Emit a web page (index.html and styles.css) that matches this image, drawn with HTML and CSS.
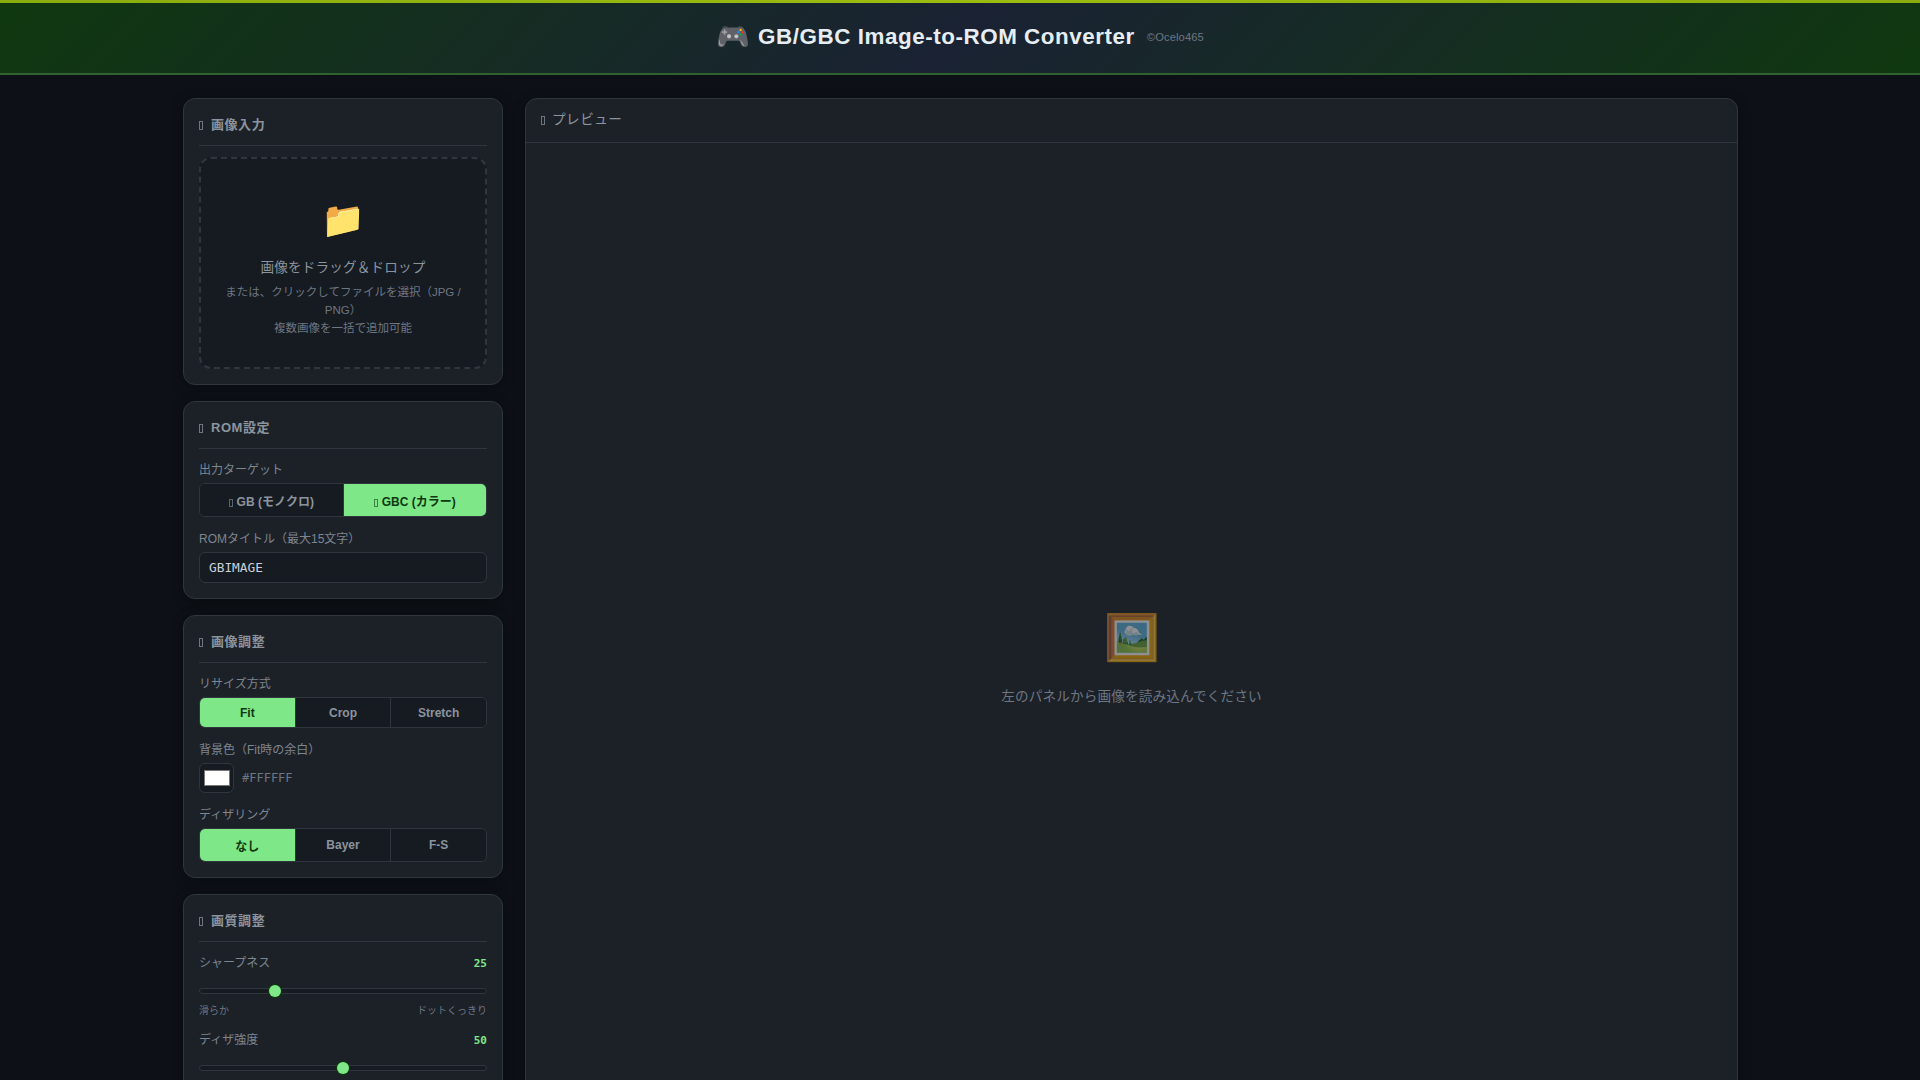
FILE: index.html
```html
<!DOCTYPE html>
<html lang="ja">
<head>
<meta charset="utf-8">
<title>GB/GBC Image-to-ROM Converter</title>
<link rel="stylesheet" href="styles.css">
</head>
<body>
<header class="app-header">
  <h1 class="app-title"><span class="app-emoji">🎮</span>GB/GBC Image-to-ROM Converter</h1>
  <span class="app-credit">©Ocelo465</span>
</header>
<main class="layout">
  <aside class="sidebar">
    <section class="panel">
      <h2 class="panel-title"><span class="tofu"></span>画像入力</h2>
      <div class="dropzone">
        <div class="drop-icon">📁</div>
        <p class="drop-main">画像をドラッグ＆ドロップ</p>
        <p class="drop-sub">または、クリックしてファイルを選択（JPG / PNG）<br>複数画像を一括で追加可能</p>
      </div>
    </section>
    <section class="panel">
      <h2 class="panel-title"><span class="tofu"></span>ROM設定</h2>
      <div class="field">
        <label class="field-label">出力ターゲット</label>
        <div class="toggle">
          <button class="toggle-btn"><span class="tofu tofu-sm"></span>GB (モノクロ)</button>
          <button class="toggle-btn is-active"><span class="tofu tofu-sm"></span>GBC (カラー)</button>
        </div>
      </div>
      <div class="field">
        <label class="field-label">ROMタイトル（最大15文字）</label>
        <input class="text-input" type="text" value="GBIMAGE">
      </div>
    </section>
    <section class="panel">
      <h2 class="panel-title"><span class="tofu"></span>画像調整</h2>
      <div class="field">
        <label class="field-label">リサイズ方式</label>
        <div class="toggle">
          <button class="toggle-btn is-active">Fit</button>
          <button class="toggle-btn">Crop</button>
          <button class="toggle-btn">Stretch</button>
        </div>
      </div>
      <div class="field">
        <label class="field-label">背景色（Fit時の余白）</label>
        <div class="color-row">
          <input class="color-input" type="color" value="#ffffff">
          <span class="color-value">#FFFFFF</span>
        </div>
      </div>
      <div class="field">
        <label class="field-label">ディザリング</label>
        <div class="toggle">
          <button class="toggle-btn is-active">なし</button>
          <button class="toggle-btn">Bayer</button>
          <button class="toggle-btn">F-S</button>
        </div>
      </div>
    </section>
    <section class="panel">
      <h2 class="panel-title"><span class="tofu"></span>画質調整</h2>
      <div class="field field-slider">
        <div class="slider-head"><label class="field-label">シャープネス</label><span class="slider-value">25</span></div>
        <input class="slider" type="range" min="0" max="100" value="25">
        <div class="slider-ends"><span>滑らか</span><span>ドットくっきり</span></div>
      </div>
      <div class="field field-slider">
        <div class="slider-head"><label class="field-label">ディザ強度</label><span class="slider-value">50</span></div>
        <input class="slider" type="range" min="0" max="100" value="50">
      </div>
    </section>
  </aside>
  <section class="preview">
    <h2 class="preview-title"><span class="tofu tofu-preview"></span>プレビュー</h2>
    <div class="preview-body">
      <div class="preview-icon">🖼️</div>
      <p class="preview-text">左のパネルから画像を読み込んでください</p>
    </div>
  </section>
</main>
</body>
</html>
```
FILE: styles.css
```css
* { box-sizing: border-box; }
html, body { margin: 0; height: 100%; overflow: hidden; }
body {
  background: #0d1117;
  color: #8b949e;
  font-family: "Liberation Sans", "Noto Sans CJK JP", sans-serif;
  font-size: 13px;
}
.app-header {
  height: 75px;
  padding: 3px 0 3px;
  display: flex;
  align-items: center;
  justify-content: center;
  gap: 12px;
  border-bottom: 2px solid #306230;
  background:
    linear-gradient(90deg, #8bac0f, #9bbc0f 50%, #8bac0f) 0 0 / 100% 3px no-repeat,
    linear-gradient(135deg, #0f380f 0%, #1a2233 50%, #0f380f 100%);
}
.app-title {
  margin: 0;
  display: flex;
  align-items: center;
  gap: 8px;
  font-size: 22.4px;
  font-weight: 700;
  letter-spacing: 0.55px;
  color: #e6edf3;
}
.app-emoji { font-size: 27.2px; letter-spacing: 0; }
.app-credit { font-size: 11.2px; letter-spacing: 0.1px; color: #6e7681; }
.layout {
  display: grid;
  grid-template-columns: 320px 1fr;
  gap: 22px;
  padding: 23px 182px 0 183px;
  height: 1005px;
  overflow: hidden;
  align-items: start;
}
.sidebar { display: flex; flex-direction: column; gap: 16px; }
.panel {
  background: #1c2128;
  border: 1px solid #30363d;
  border-radius: 12px;
  padding: 15px;
  box-shadow: 0 2px 12px rgba(0, 0, 0, 0.4);
}
.panel-title {
  margin: 0 0 11.5px;
  padding-bottom: 11.5px;
  border-bottom: 1px solid #30363d;
  font-size: 13px;
  font-weight: 700;
  letter-spacing: 0.55px;
  color: #8b949e;
}
.tofu {
  display: inline-block;
  width: 4px;
  height: 9px;
  margin-right: 8px;
  border: 1px solid #6e7681;
  vertical-align: -1px;
}
.tofu-sm { height: 8px; margin-right: 4px; opacity: 0.8; }
.tofu-preview { margin-right: 7px; }
.is-active .tofu-sm { border-color: #2f6a33; }
.dropzone {
  border: 2px dashed #30363d;
  border-radius: 12px;
  background: #161b22;
  padding: 30px 16px;
  text-align: center;
}
.drop-icon { font-size: 35.2px; margin-bottom: 5px; line-height: 62px; }
.drop-main { margin: 0 0 7px; font-size: 13.6px; letter-spacing: 0.15px; }
.drop-sub { margin: 0; font-size: 11.5px; line-height: 18px; color: #6e7681; }
.field { margin-bottom: 12px; }
.field:last-child { margin-bottom: 0; }
.field-slider { margin-bottom: 13px; }
.field-label { display: block; margin-bottom: 6px; font-size: 12px; color: #7d8590; }
.toggle {
  display: flex;
  border: 1px solid #30363d;
  border-radius: 6px;
  overflow: hidden;
  background: #161b22;
}
.toggle-btn {
  flex: 1 1 0;
  padding: 7.5px 4px;
  border: 0;
  border-right: 1px solid #30363d;
  background: #161b22;
  color: #8b949e;
  font: 700 12px "Liberation Sans", "Noto Sans CJK JP", sans-serif;
}
.toggle-btn:last-child { border-right: 0; }
.toggle-btn.is-active { background: #7ee787; color: #0f380f; }
.text-input {
  display: block;
  width: 100%;
  height: 31px;
  padding: 0 9px;
  border: 1px solid #30363d;
  border-radius: 6px;
  background: #161b22;
  color: #c9d1d9;
  font: 12.8px "DejaVu Sans Mono", monospace;
}
.color-row { display: flex; align-items: center; gap: 8px; }
.color-input {
  width: 35px;
  height: 30px;
  padding: 0;
  border: 1px solid #30363d;
  border-radius: 6px;
  background: #161b22;
}
.color-input::-webkit-color-swatch-wrapper { padding: 6px 3.5px; }
.color-value { font: 12px "DejaVu Sans Mono", monospace; color: #6e7681; }
.slider-head { display: flex; justify-content: space-between; align-items: baseline; }
.slider-value { font: 700 11px "DejaVu Sans Mono", monospace; color: #7ee787; }
.slider {
  display: block;
  width: 100%;
  height: 14px;
  margin: 8px 0 3.5px;
  appearance: none;
  -webkit-appearance: none;
  background: transparent;
}
.slider::-webkit-slider-runnable-track {
  height: 6px;
  border: 1px solid #30363d;
  border-radius: 3px;
  background: #161b22;
}
.slider::-webkit-slider-thumb {
  -webkit-appearance: none;
  width: 12px;
  height: 12px;
  margin-top: -4px;
  border-radius: 50%;
  background: #7ee787;
  box-shadow: 0 0 0 1px #0f380f;
}
.slider-ends { display: flex; justify-content: space-between; font-size: 10px; color: #6e7681; }
.preview {
  height: 1075px;
  display: flex;
  flex-direction: column;
  background: #1c2128;
  border: 1px solid #30363d;
  border-radius: 12px;
  box-shadow: 0 2px 12px rgba(0, 0, 0, 0.4);
}
.preview-title {
  margin: 0;
  padding: 9px 15px 14px;
  border-bottom: 1px solid #30363d;
  font-size: 13.6px;
  font-weight: 400;
  letter-spacing: 0.5px;
  color: #8b949e;
}
.preview-body {
  flex: 1;
  display: flex;
  flex-direction: column;
  align-items: center;
  justify-content: center;
}
.preview-icon { font-size: 44.8px; opacity: 0.5; margin-bottom: 21px; }
.preview-text { margin: 0; font-size: 13.6px; letter-spacing: 0.15px; color: #6e7681; }
```
